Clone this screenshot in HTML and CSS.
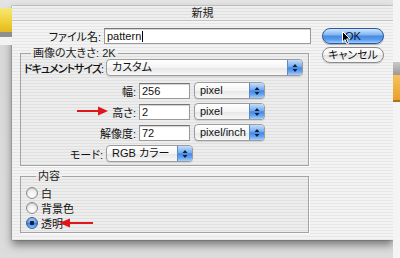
FILE: index.html
```html
<!DOCTYPE html>
<html lang="ja">
<head>
<meta charset="utf-8">
<title>新規</title>
<link rel="stylesheet" href="styles.css">
</head>
<body>
<div class="desk">
  <div class="bg-left"><div class="bg-yellow"></div><div class="bg-bar"></div></div>
  <div class="bg-right"><div class="bg-gray"></div><div class="bg-orange"></div></div>

  <div class="dialog">
    <div class="titlebar">新規</div>
    <div class="dlg-body">
      <div class="main">
        <div class="file-row">
          <span class="lbl file-lbl">ファイル名:</span>
          <div class="field file-field">pattern<span class="caret"></span></div>
        </div>

        <fieldset class="group size-group">
          <legend>画像の大きさ: 2K</legend>
          <div class="row">
            <span class="lbl lbl-a tight">ドキュメントサイズ:</span>
            <div class="popup doc-popup"><span class="pv">カスタム</span><span class="arrows"><svg width="6" height="10" viewBox="0 0 6 10"><path d="M3 1 L5.5 4 L0.5 4 Z M3 9 L5.5 6 L0.5 6 Z" fill="#10203f"/></svg></span></div>
          </div>
          <div class="row row-gap6">
            <span class="lbl lbl-b">幅:</span>
            <div class="field num">256</div>
            <div class="popup unit"><span class="pv">pixel</span><span class="arrows"><svg width="6" height="10" viewBox="0 0 6 10"><path d="M3 1 L5.5 4 L0.5 4 Z M3 9 L5.5 6 L0.5 6 Z" fill="#10203f"/></svg></span></div>
          </div>
          <div class="row row-gap4">
            <span class="lbl lbl-b">高さ:</span>
            <div class="field num">2</div>
            <div class="popup unit"><span class="pv">pixel</span><span class="arrows"><svg width="6" height="10" viewBox="0 0 6 10"><path d="M3 1 L5.5 4 L0.5 4 Z M3 9 L5.5 6 L0.5 6 Z" fill="#10203f"/></svg></span></div>
          </div>
          <div class="row row-gap4">
            <span class="lbl lbl-b">解像度:</span>
            <div class="field num">72</div>
            <div class="popup unit"><span class="pv">pixel/inch</span><span class="arrows"><svg width="6" height="10" viewBox="0 0 6 10"><path d="M3 1 L5.5 4 L0.5 4 Z M3 9 L5.5 6 L0.5 6 Z" fill="#10203f"/></svg></span></div>
          </div>
          <div class="row row-gap4">
            <span class="lbl lbl-a">モード:</span>
            <div class="popup mode-popup"><span class="pv">RGB カラー</span><span class="arrows"><svg width="6" height="10" viewBox="0 0 6 10"><path d="M3 1 L5.5 4 L0.5 4 Z M3 9 L5.5 6 L0.5 6 Z" fill="#10203f"/></svg></span></div>
          </div>
        </fieldset>

        <fieldset class="group content-group">
          <legend>内容</legend>
          <div class="radio-row"><span class="radio"></span><span>白</span></div>
          <div class="radio-row"><span class="radio"></span><span>背景色</span></div>
          <div class="radio-row"><span class="radio on"></span><span>透明</span></div>
        </fieldset>
      </div>

      <div class="buttons">
        <div class="btn btn-ok">OK</div>
        <div class="btn btn-cancel">キャンセル</div>
      </div>
    </div>
  </div>

  <svg class="red-arrow arrow-1" width="32" height="10" viewBox="0 0 32 10">
    <path d="M0 5 H23" stroke="#e0161a" stroke-width="2"/>
    <path d="M31 5 L21 0.5 L21 9.5 Z" fill="#e0161a"/>
  </svg>
  <svg class="red-arrow arrow-2" width="34" height="10" viewBox="0 0 34 10">
    <path d="M9 5 H34" stroke="#e0161a" stroke-width="2"/>
    <path d="M0 5 L11 0.5 L11 9.5 Z" fill="#e0161a"/>
  </svg>
  <svg class="cursor" width="9" height="14" viewBox="0 0 9 14">
    <path d="M0.5 0.5 L0.5 11 L3 8.6 L5 13 L6.6 12.3 L4.7 8 L8 8 Z" fill="#000" stroke="#fff" stroke-width="1"/>
  </svg>
</div>
</body>
</html>
```

FILE: styles.css
```css
html, body {
  margin: 0;
  padding: 0;
}

body {
  background: #dadada;
  font-family: "Liberation Sans", "Noto Sans CJK JP", sans-serif;
  font-size: 11px;
  font-feature-settings: "palt";
  color: #111;
}

.desk {
  position: relative;
  width: 400px;
  height: 258px;
  overflow: hidden;
  padding: 6px 0 0 12px;
  box-sizing: border-box;
  background: linear-gradient(#e4e4e4, #d8d8d8 30px, #dcdcdc);
}

/* windows behind the dialog */
.bg-left {
  position: absolute;
  left: 0;
  top: 8px;
  width: 12px;
}
.bg-yellow {
  height: 24px;
  background: linear-gradient(#f6e77a, #efcf33 60%, #e2b820);
}
.bg-bar {
  height: 5px;
  background: #8e8e8e;
  border-bottom: 8px solid #f2f2f2;
}
.bg-right {
  position: absolute;
  right: 0;
  top: 0;
  width: 7px;
  height: 258px;
  background: #f4f4f4;
}
.bg-gray {
  margin-top: 62px;
  height: 13px;
  background: linear-gradient(#c8c8c8, #9a9a9a);
}
.bg-orange {
  height: 25px;
  background: linear-gradient(#f6c25a, #e8a12a);
  border-bottom: 2px solid #b07020;
}

/* dialog window */
.dialog {
  width: 381px;
  height: 234px;
  box-sizing: border-box;
  background: repeating-linear-gradient(180deg, #f3f3f3 0 2px, #e6e6e6 2px 3px);
  box-shadow: 0 5px 9px rgba(0, 0, 0, 0.45), 0 0 0 1px rgba(0, 0, 0, 0.12);
  border-radius: 1px;
}

.titlebar {
  height: 14px;
  line-height: 14px;
  text-align: center;
  font-size: 11px;
  color: #222;
  border-bottom: 1px solid #c4c4c4;
  background: repeating-linear-gradient(180deg, #eeeeee 0 2px, #e0e0e0 2px 3px);
}

.dlg-body {
  display: flex;
  gap: 11px;
  padding: 7px 9px 7px 8px;
}

.main {
  width: 291px;
  display: flex;
  flex-direction: column;
}

.lbl {
  text-align: right;
  white-space: nowrap;
  flex: none;
}
.tight {
  letter-spacing: -1px;
  font-weight: 500;
}

.file-row {
  display: flex;
  align-items: center;
  gap: 3px;
  height: 16px;
}
.file-lbl {
  width: 81px;
}

.field {
  box-sizing: border-box;
  height: 16px;
  line-height: 14px;
  padding-left: 2px;
  background: #fff;
  border: 1px solid #9a9a9a;
  border-top-color: #747474;
  box-shadow: inset 0 1px 1px rgba(0, 0, 0, 0.18);
  color: #111;
  white-space: nowrap;
}
.file-field {
  flex: 1;
  position: relative;
}
.caret {
  display: inline-block;
  width: 1px;
  height: 11px;
  background: #000;
  vertical-align: -2px;
  margin-left: 1px;
}

/* group boxes */
.group {
  margin: 0;
  padding: 0;
  min-inline-size: 0;
  width: 289px;
  box-sizing: border-box;
  border: 1px solid #a3a3a3;
  background: rgba(0, 0, 0, 0.025);
  box-shadow: 1px 1px 0 rgba(255, 255, 255, 0.8);
}
.group legend {
  margin-left: 10px;
  padding: 0 2px;
  line-height: 12px;
  font-size: 11px;
  color: #222;
}

.size-group {
  margin-top: 3px;
  padding: 0 0 3px 0;
}

.row {
  display: flex;
  align-items: center;
  height: 17px;
}
.row-gap6 { margin-top: 6px; }
.row-gap4 { margin-top: 4px; }

.lbl-a { width: 82px; margin-right: 3px; }
.lbl-b { width: 115px; margin-right: 3px; }

.num {
  width: 51px;
  margin-right: 4px;
}

/* popup buttons */
.popup {
  box-sizing: border-box;
  height: 17px;
  display: flex;
  border: 1px solid #9c9c9c;
  border-radius: 4px;
  background: linear-gradient(#ffffff, #f4f4f4 50%, #e6e6e6 52%, #f8f8f8);
  box-shadow: 0 1px 1px rgba(0, 0, 0, 0.12);
  overflow: hidden;
}
.popup .pv {
  flex: 1;
  padding-left: 5px;
  line-height: 15px;
  white-space: nowrap;
  color: #111;
}
.popup .arrows {
  width: 14px;
  flex: none;
  display: flex;
  align-items: center;
  justify-content: center;
  background: linear-gradient(#c4defb, #74aaee 45%, #4587e2 52%, #6aa8f2 80%, #a9d1fb);
  border-left: 1px solid #5c88c4;
}
.doc-popup { width: 197px; }
.unit { width: 71px; }
.mode-popup { width: 87px; }

/* contents group */
.content-group {
  margin-top: 4px;
  padding: 3px 0 2px 5px;
}
.radio-row {
  display: flex;
  align-items: center;
  gap: 3px;
  height: 15px;
}
.radio {
  width: 12px;
  height: 12px;
  box-sizing: border-box;
  border-radius: 50%;
  border: 1px solid #8c8c8c;
  background: radial-gradient(circle at 50% 70%, #ffffff, #ececec 60%, #d6d6d6);
  box-shadow: inset 0 1px 1px rgba(0, 0, 0, 0.15);
}
.radio.on {
  border-color: #2f5e9e;
  background: radial-gradient(circle, #0d1f3d 0 2px, transparent 2.5px),
              linear-gradient(#b6d4f8, #5c99e6 50%, #3d80dc 55%, #8fc2f6);
}

/* push buttons */
.buttons {
  width: 62px;
  display: flex;
  flex-direction: column;
  gap: 3px;
}
.btn {
  box-sizing: border-box;
  height: 16px;
  line-height: 14px;
  text-align: center;
  border-radius: 8px;
  white-space: nowrap;
}
.btn-ok {
  border: 1px solid #2c5aa0;
  background: linear-gradient(#cfe3fb 0%, #86b7f0 40%, #4a8be3 52%, #5b9ded 78%, #a4cffb 100%);
  color: #0b1936;
  box-shadow: 0 1px 1px rgba(0, 0, 0, 0.25);
}
.btn-cancel {
  border: 1px solid #8a8a8a;
  background: linear-gradient(#ffffff, #f3f3f3 48%, #e2e2e2 52%, #fafafa);
  color: #111;
  box-shadow: 0 1px 1px rgba(0, 0, 0, 0.15);
}

/* overlays */
.red-arrow {
  position: absolute;
}
.arrow-1 {
  left: 77px;
  top: 106px;
}
.arrow-2 {
  left: 59px;
  top: 218px;
}
.cursor {
  position: absolute;
  left: 342px;
  top: 31px;
}
```
